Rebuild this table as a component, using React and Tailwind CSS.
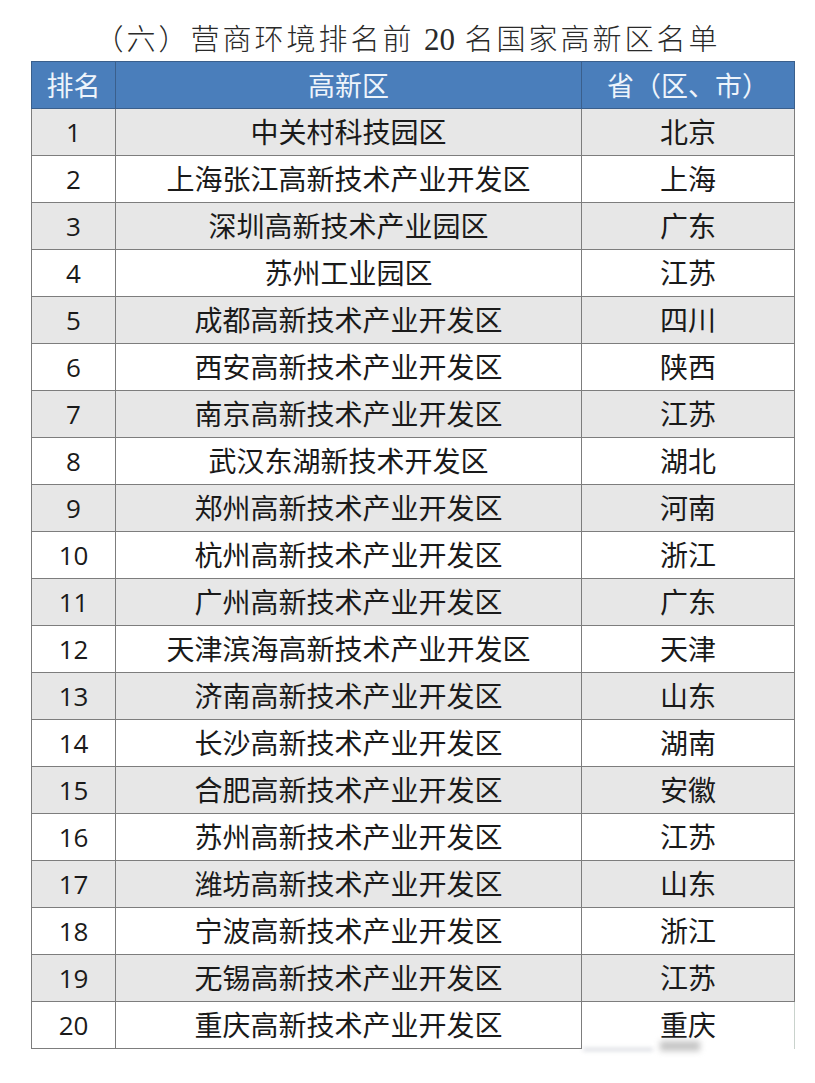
import React from "react";

const rows = [
  ["1", "中关村科技园区", "北京"],
  ["2", "上海张江高新技术产业开发区", "上海"],
  ["3", "深圳高新技术产业园区", "广东"],
  ["4", "苏州工业园区", "江苏"],
  ["5", "成都高新技术产业开发区", "四川"],
  ["6", "西安高新技术产业开发区", "陕西"],
  ["7", "南京高新技术产业开发区", "江苏"],
  ["8", "武汉东湖新技术开发区", "湖北"],
  ["9", "郑州高新技术产业开发区", "河南"],
  ["10", "杭州高新技术产业开发区", "浙江"],
  ["11", "广州高新技术产业开发区", "广东"],
  ["12", "天津滨海高新技术产业开发区", "天津"],
  ["13", "济南高新技术产业开发区", "山东"],
  ["14", "长沙高新技术产业开发区", "湖南"],
  ["15", "合肥高新技术产业开发区", "安徽"],
  ["16", "苏州高新技术产业开发区", "江苏"],
  ["17", "潍坊高新技术产业开发区", "山东"],
  ["18", "宁波高新技术产业开发区", "浙江"],
  ["19", "无锡高新技术产业开发区", "江苏"],
  ["20", "重庆高新技术产业开发区", "重庆"],
];

const App = () => {
  return (
    <div className="w-[815px] h-[1083px] bg-white font-['Open_Sans','Noto_Sans_CJK_SC',sans-serif] text-[#1a1a1a]">
      <div className="h-[61px] flex items-center justify-center pt-[16px]">
        <h1 className="text-[29px] leading-none tracking-[3px] text-[#2a2a2a] font-['Noto_Sans_CJK_SC',sans-serif] font-light">
          （六）营商环境排名前 <span className="font-['Liberation_Serif',serif] text-[31px] tracking-normal">20</span> 名国家高新区名单
        </h1>
      </div>

      <div className="relative ml-[31px] w-[763px]">
        <table className="w-full border-collapse table-fixed">
          <colgroup>
            <col className="w-[84px]" />
            <col className="w-[466px]" />
            <col className="w-[213px]" />
          </colgroup>
          <thead>
            <tr className="h-[47px] bg-[#4a7ebb] text-[#eef4fb] text-[27px] leading-none">
              <th className="border border-[#3a5f8c] font-normal">排名</th>
              <th className="border border-[#3a5f8c] font-normal">高新区</th>
              <th className="border border-[#3a5f8c] font-normal">省（区、市）</th>
            </tr>
          </thead>
          <tbody>
            {rows.map(([rank, name, prov], i) => {
              const last = i === rows.length - 1;
              return (
                <tr key={rank} className={`h-[47px] text-[28px] leading-none ${i % 2 === 0 ? "bg-[#e7e7e7]" : "bg-white"}`}>
                  <td className="border border-[#7d7d7d] text-center text-[26px]">{rank}</td>
                  <td className="border border-[#7d7d7d] text-center">{name}</td>
                  <td
                    className={
                      last
                        ? "border-l border-t border-r border-[#7d7d7d] border-r-[#c9d2cc] text-center"
                        : "border border-[#7d7d7d] text-center"
                    }
                  >
                    {prov}
                  </td>
                </tr>
              );
            })}
          </tbody>
        </table>
        <div className="absolute right-[94px] bottom-[-2px] w-[40px] h-[10px] bg-[#8a8a8a] opacity-50 blur-[3px]" />
        <div className="absolute left-[552px] bottom-[-2px] w-[70px] h-[3px] bg-[#9aa0b0] opacity-40 blur-[2px]" />
      </div>
    </div>
  );
};

export default App;
